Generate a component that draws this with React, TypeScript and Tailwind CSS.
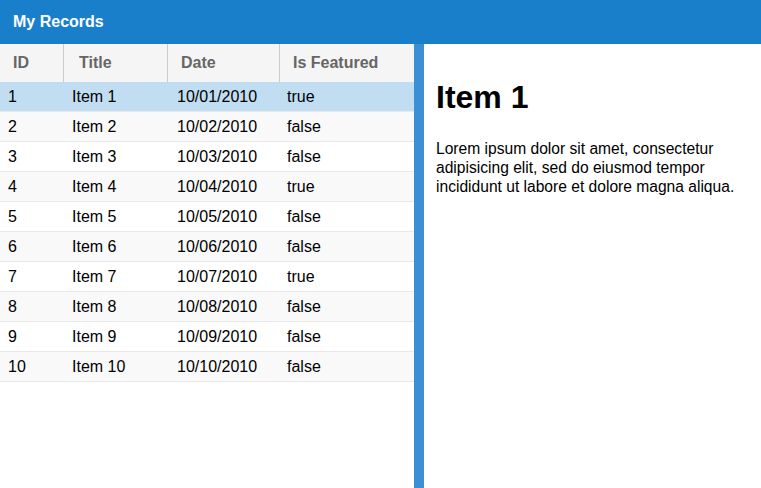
import React from "react";

const rows = Array.from({ length: 10 }, (_, i) => {
  const n = i + 1;
  const featured = n === 1 || n === 4 || n === 7;
  return {
    id: n,
    title: `Item ${n}`,
    date: `10/${String(n).padStart(2, "0")}/2010`,
    featured: featured ? "true" : "false",
  };
});

export default function App() {
  return (
    <div
      className="w-[761px] h-[488px] flex flex-col bg-white overflow-hidden"
      style={{ fontFamily: '"Liberation Sans", Arial, sans-serif' }}
    >
      <div className="h-[44px] bg-[#1a7fcb] flex items-center pl-[13px] text-white font-bold text-[16px] shrink-0">
        My Records
      </div>
      <div className="flex flex-1 min-h-0">
        <div className="w-[414px] shrink-0 bg-white">
          <div className="flex h-[38px] bg-[#f5f5f5] text-[#666] font-bold text-[16px] items-stretch">
            <div className="w-[64px] border-r border-[#cccccc] flex items-center pl-[13px]">ID</div>
            <div className="w-[104px] border-r border-[#cccccc] flex items-center pl-[15px]">Title</div>
            <div className="w-[112px] border-r border-[#cccccc] flex items-center pl-[13px]">Date</div>
            <div className="flex-1 flex items-center pl-[13px]">Is Featured</div>
          </div>
          {rows.map((r, i) => (
            <div
              key={r.id}
              className={`flex h-[30px] items-center text-[16px] text-black border-b border-[#e8e8e8] ${
                i === 0 ? "bg-[#c1ddf2]" : i % 2 === 1 ? "bg-[#f9f9f9]" : "bg-white"
              }`}
            >
              <div className="w-[64px] pl-[8px]">{r.id}</div>
              <div className="w-[104px] pl-[8px]">{r.title}</div>
              <div className="w-[112px] pl-[9px]">{r.date}</div>
              <div className="flex-1 pl-[7px]">{r.featured}</div>
            </div>
          ))}
        </div>
        <div className="w-[10px] shrink-0 bg-[#3a8fd5]" />
        <div className="flex-1 px-[12px] pt-[35px] text-black">
          <div className="text-[32px] font-bold leading-[37px]">Item 1</div>
          <p className="mt-[23px] text-[15.6px] leading-[19px]">
            Lorem ipsum dolor sit amet, consectetur adipisicing elit, sed do eiusmod tempor incididunt ut labore et dolore magna aliqua.
          </p>
        </div>
      </div>
    </div>
  );
}
